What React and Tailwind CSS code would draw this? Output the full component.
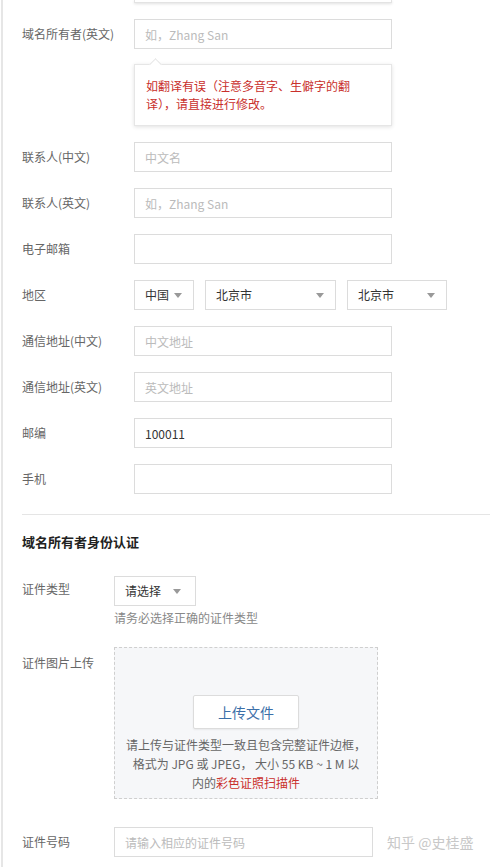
import { useState } from 'react'

const font = { fontFamily: '"Noto Sans CJK SC", "Noto Sans", sans-serif' }

function Caret() {
  return (
    <svg className="h-[5px] w-[8px] flex-shrink-0" viewBox="0 0 8 5" fill="#999">
      <path d="M0 0h8L4 5z" />
    </svg>
  )
}

function Field({ label, placeholder, value }) {
  return (
    <div className="flex items-center h-[30px]">
      <label className="w-[112px] flex-shrink-0 text-[12px] text-[#666]">{label}</label>
      <input
        className="w-[258px] h-[30px] border border-[#dcdcdc] px-[10px] text-[12px] text-[#333] placeholder:text-[#bbb] outline-none"
        placeholder={placeholder}
        defaultValue={value}
      />
    </div>
  )
}

function Select({ value, width }) {
  return (
    <button className={`${width} h-[30px] border border-[#dcdcdc] bg-white flex items-center justify-between pl-[10px] pr-[11px] text-[12px] text-[#333]`}>
      <span>{value}</span>
      <Caret />
    </button>
  )
}

export default function App() {
  const [type] = useState('请选择')

  return (
    <div className="min-h-[867px] bg-white border-l-2 border-[#e6e6e6] ml-[1px] overflow-hidden" style={font}>
      {/* tail of the box above */}
      <div className="ml-[131px] w-[258px] h-[3px] border-x border-b border-[#e3e3e3] shadow-[0_1px_3px_rgba(0,0,0,0.12)]" />

      <div className="pl-[19px] pt-[16px] flex flex-col">
        <Field label="域名所有者(英文)" placeholder="如，Zhang San" />

        {/* translation hint */}
        <div className="relative ml-[112px] mt-[15px] w-[258px] h-[62px] border border-[#e6e6e6] bg-white shadow-[0_1px_4px_rgba(0,0,0,0.12)] px-[11px] pt-[12px]">
          <span className="absolute -top-[5px] left-[16px] w-[9px] h-[9px] rotate-45 bg-white border-l border-t border-[#e6e6e6]" />
          <p className="max-w-[210px] text-[12px] leading-[18px] text-[#c9302c]">
            如翻译有误（注意多音字、生僻字的翻译），请直接进行修改。
          </p>
        </div>

        <div className="mt-[16px] flex flex-col gap-[16px]">
          <Field label="联系人(中文)" placeholder="中文名" />
          <Field label="联系人(英文)" placeholder="如，Zhang San" />
          <Field label="电子邮箱" />
          <div className="flex items-center h-[30px]">
            <label className="w-[112px] flex-shrink-0 text-[12px] text-[#666]">地区</label>
            <div className="flex gap-[11px]">
              <Select value="中国" width="w-[60px]" />
              <Select value="北京市" width="w-[131px]" />
              <Select value="北京市" width="w-[100px]" />
            </div>
          </div>
          <Field label="通信地址(中文)" placeholder="中文地址" />
          <Field label="通信地址(英文)" placeholder="英文地址" />
          <Field label="邮编" value="100011" />
          <Field label="手机" />
        </div>
      </div>

      <div className="ml-[19px] mt-[20px] border-t border-[#e5e5e5]" />

      <div className="pl-[19px] pt-[18px]">
        <h2 className="text-[13px] font-bold text-[#222] leading-[18px]">域名所有者身份认证</h2>

        <div className="mt-[25px] flex">
          <label className="w-[92px] flex-shrink-0 pt-[4px] text-[12px] text-[#666]">证件类型</label>
          <div>
            <button className="w-[82px] h-[30px] border border-[#dcdcdc] bg-white flex items-center gap-[12px] pl-[10px] text-[12px] text-[#333]">
              <span>{type}</span>
              <Caret />
            </button>
            <p className="mt-[4px] text-[12px] leading-[16px] text-[#888]">请务必选择正确的证件类型</p>
          </div>
        </div>

        <div className="mt-[21px] flex">
          <label className="w-[92px] flex-shrink-0 pt-[7px] text-[12px] text-[#666]">证件图片上传</label>
          <div className="w-[264px] h-[152px] border border-dashed border-[#cfcfcf] bg-[#f6f7f9] flex flex-col items-center pt-[47px]">
            <button className="w-[106px] h-[34px] bg-white border border-[#dcdcdc] rounded-[2px] shadow-[0_1px_2px_rgba(0,0,0,0.06)] text-[14px] text-[#3b6fa8]">
              上传文件
            </button>
            <p className="mt-[6px] text-center text-[12px] leading-[19px] text-[#666] whitespace-nowrap">
              请上传与证件类型一致且包含完整证件边框，<br />
              格式为 JPG 或 JPEG， 大小 55 KB ~ 1 M 以<br />
              内的<span className="text-[#c9302c]">彩色证照扫描件</span>
            </p>
          </div>
        </div>

        <div className="mt-[28px] flex items-center">
          <label className="w-[92px] flex-shrink-0 text-[12px] text-[#666]">证件号码</label>
          <input
            className="w-[259px] h-[30px] border border-[#dcdcdc] px-[10px] text-[12px] placeholder:text-[#bbb] outline-none"
            placeholder="请输入相应的证件号码"
          />
          <span className="ml-[14px] text-[14px] text-[#c8c8c8] whitespace-nowrap">知乎 @史桂盛</span>
        </div>
      </div>
    </div>
  )
}
